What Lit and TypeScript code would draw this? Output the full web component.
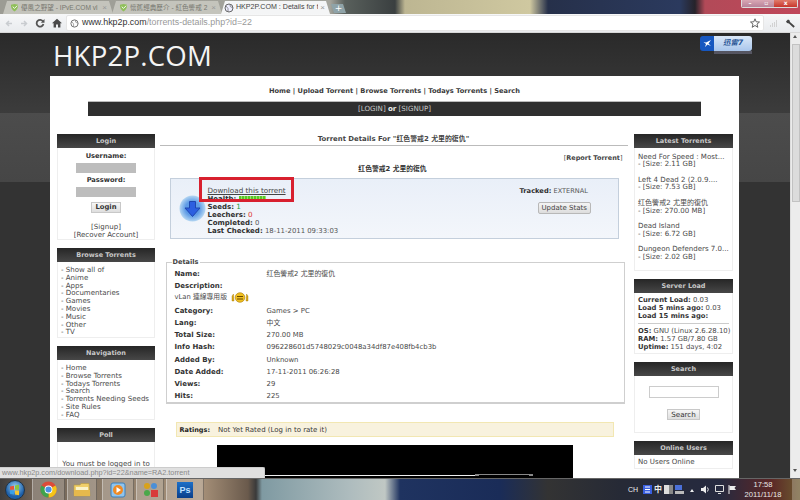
import { LitElement, html, css, svg } from "lit";
import { customElement } from "lit/decorators.js";

const shield = svg`<svg width="9" height="9" viewBox="0 0 10 10"><path d="M1 2 L5 1 L9 2 Q9 7 5 9.5 Q1 7 1 2Z" fill="#8fbf5a"/><path d="M3 4 L5 6 L8 3" stroke="#fff" fill="none"/></svg>`;
const globe = svg`<svg width="10" height="10" viewBox="0 0 10 10"><circle cx="5" cy="5" r="4" fill="#eef" stroke="#666"/><path d="M2 3 Q5 5 4 9 M6 1 Q5 4 9 5" stroke="#777" fill="none" stroke-width=".8"/></svg>`;

@customElement("app-root")
export class AppRoot extends LitElement {
  static styles = css`
    :host { display: block; width: 800px; height: 500px; overflow: hidden; position: relative; font-family: "DejaVu Sans", Verdana, "Noto Sans CJK TC", sans-serif; font-size: 7.05px; line-height: 7.8px; color: #4a4a4a; background: #333; }
    * { box-sizing: border-box; }
    .win { width: 800px; height: 500px; display: flex; flex-direction: column; }
    .tabbar { height: 14px; flex: none; position: relative; display: flex; align-items: flex-end; padding-left: 3px; background: linear-gradient(90deg, #9c9c94 0, #a5a59d 330px, #59605c 345px, #3a3f40 395px, #bdb692 405px, #cfc8a0 530px, #26304a 548px, #2b3a5e 680px, #26232a 695px, #b24a58 705px, #c0475a 800px); }
    .tab { height: 13px; width: 110px; margin-right: -1px; padding: 0 6px 0 7px; display: flex; align-items: center; gap: 2px; font-family: "Liberation Sans", "Noto Sans CJK TC", sans-serif; font-size: 6.6px; color: #77776f; white-space: nowrap; overflow: hidden; background: #c4c4bc; clip-path: polygon(0 100%, 4px 0, calc(100% - 4px) 0, 100% 100%); }
    .tab span.t { flex: 1; overflow: hidden; }
    .tab i { font-style: normal; color: #999; font-size: 8px; }
    .tab.sel { width: 109px; padding: 0 5px 0 3px; background: #f4f5f6; color: #444; font-size: 7.1px; }
    .newtab { width: 15px; height: 9px; margin-left: 2px; margin-bottom: 1px; background: #8fa3a8; color: #fff; font-size: 9px; line-height: 9px; text-align: center; clip-path: polygon(0 0, 80% 0, 100% 100%, 20% 100%); }
    .winbtns { position: absolute; right: 2px; top: 0; width: 57px; height: 8px; display: flex; border-radius: 0 0 2px 2px; overflow: hidden; border: 1px solid #ddd; border-top: 0; }
    .winbtns b { flex: 1; background: linear-gradient(#d9a7b4, #b8849a); color: #fff; font-size: 6px; line-height: 6px; text-align: center; }
    .winbtns b.x { flex: 1.4; background: linear-gradient(#e07a6a, #c8362c); }
    .toolbar { height: 19px; flex: none; display: flex; align-items: center; background: linear-gradient(#f6f7f8, #e9ebee); border-bottom: 1px solid #d8d8d8; padding: 0 2px 0 5px; }
    .navic { display: flex; gap: 7px; align-items: center; width: 61px; flex: none; }
    .omni { flex: 1; height: 16px; background: #fff; border: 1px solid #e6e6e6; border-radius: 2px; display: flex; align-items: center; gap: 3px; padding: 0 3px 0 3px; font-family: "Liberation Sans", sans-serif; font-size: 8.9px; color: #999; margin-right: 5px; }
    .omni span { flex: 1; }
    .omni b { font-weight: 400; color: #333; }
    .tools { display: flex; gap: 7px; align-items: center; width: 29px; flex: none; }
    .view { flex: 1; min-height: 0; display: flex; position: relative; }
    .page { flex: 1; min-width: 0; overflow: hidden; background: linear-gradient(#2a2a2a 0, #3c3c3c 80px, #4c4c4c 80px, #464646 149px, #333 149px); }
    .sb { width: 10px; flex: none; background: #ececec; display: flex; flex-direction: column; align-items: center; border-left: 1px solid #ddd; padding-top: 11px; }
    .thumb { width: 8px; height: 158px; background: #dcdcdc; border: 1px solid #c2c2c2; }
    .sbup { position: absolute; right: 3px; top: 0; border: 2.5px solid transparent; border-bottom: 3px solid #555; }
    .sbdn { position: absolute; right: 3px; bottom: 4px; border: 2.5px solid transparent; border-top: 3px solid #555; }
    .head { height: 43px; padding-left: 53px; position: relative; }
    .logo { font-family: "Open Sans", sans-serif; font-size: 27.6px; line-height: 36px; padding-top: 4px; color: #f4f4f4; letter-spacing: .2px; }
    .xl { position: absolute; left: 700px; top: 3px; width: 52px; height: 15px; display: flex; border-radius: 3px; overflow: hidden; }
    .xl .a { width: 14px; background: #1657c0; display: flex; align-items: center; justify-content: center; }
    .xl .b { flex: 1; background: linear-gradient(#dbe8f8, #a9c6ec); color: #2a5596; font-size: 7.5px; line-height: 14px; font-weight: 700; font-style: italic; text-align: center; }
    .xlsh { position: absolute; left: 714px; top: 18px; width: 38px; height: 3px; background: #667; opacity: .7; }
    .panel { margin-left: 50px; width: 689px; height: 420px; background: #fff; }
    .menu { padding-top: 12px; height: 25px; text-align: center; font-weight: 700; color: #3a3a3a; font-size: 6.65px; }
    .bar { margin: 0 38px; height: 15px; background: #2f2f2f; border-top: 1px solid #bbb; color: #c8c8c8; text-align: center; font-size: 7.1px; line-height: 14px; }
    .bar b { color: #eee; }
    .cols { display: grid; grid-template-columns: 98px 466px 99px; column-gap: 6.5px; padding: 18px 0 0 7px; }
    .side { display: flex; flex-direction: column; gap: 8px; }
    .box { border: 1px solid #eee; border-top: 0; }
    .bh { height: 14px; margin: 0 -1px; background: linear-gradient(#262626, #474747); color: #c9c9c9; font-weight: 700; font-size: 6.5px; line-height: 14px; text-align: center; }
    .login { height: 91px; text-align: center; padding-top: 4px; }
    .login b { display: block; color: #333; font-size: 6.7px; line-height: 8px; }
    .fld { display: block; width: 60px; height: 10px; margin: 3px auto 3px; background: #bdbdbd; }
    .btn { display: inline-block; background: linear-gradient(#f6f6f6, #dedede); border: 1px solid #c8c8c8; color: #333; font-size: 7.2px; line-height: 9px; padding: 0 3px; }
    .btn.bold { font-weight: 700; margin-top: 2px; font-size: 6.8px; }
    .mt { margin-top: 10px; }
    .list { padding: 4px 3px 0; height: 75px; }
    .nav { padding: 4px 3px 0; height: 59px; }
    .poll { height: 60px; padding: 18px 4px 0; text-align: center; }
    .lat { height: 122px; padding: 4.5px 3px 0; overflow: hidden; }
    .lat p { margin: 0 0 7.6px; }
    .load { height: 60px; padding: 4px 0 0 3px; white-space: nowrap; font-size: 6.9px; }
    .load b { color: #333; font-size: 6.8px; }
    .load hr { border: 0; border-top: 1px solid #ccc; margin: 3px 3px 4px 0; }
    .srch { height: 56px; text-align: center; padding-top: 10px; }
    .srch .in { display: block; width: 70px; height: 12px; margin: 0 auto 11px; border: 1px solid #ccc; }
    .online { height: 13px; padding: 3px; }
    .tt { height: 12px; margin-left: -2px; border-bottom: 1px solid #bbb; text-align: center; font-weight: 700; color: #444; font-size: 6.9px; line-height: 10px; }
    .rep { text-align: right; padding: 8px 5px 0 0; font-size: 6.5px; line-height: 8px; }
    .rep b { color: #444; }
    .t2 { text-align: center; color: #333; font-weight: 700; font-size: 6.8px; line-height: 10px; padding-top: 2px; height: 16px; margin-left: -4px; }
    .info { margin-left: 8px; width: 449px; height: 61px; background: linear-gradient(#e9eff8, #f3f6fb); border: 1px solid #c4cfdc; position: relative; display: flex; padding: 8px 0 0 37px; color: #333; font-size: 7.2px; line-height: 8px; }
    .info .arrow { position: absolute; left: 8px; top: 16px; }
    .info .l { flex: 1; }
    .info b { color: #2f2f2f; font-size: 7px; }
    .dl { color: #444; text-decoration: underline; }
    .info .r { width: 98px; font-size: 6.7px; }
    .info .r b { font-size: 6.7px; }
    .ok { color: #1a9a3a; } .bad { color: #d33; } .g { color: #555; font-weight: 400; font-size: 6.9px; }
    .info .r .g { font-size: 6.6px; }
    .hl { display: inline-block; width: 27px; height: 5px; background: repeating-linear-gradient(90deg, #58c828 0 2px, #9be06a 2px 3px); vertical-align: 0; }
    .red { position: absolute; left: 28px; top: -2px; width: 95px; height: 25px; border: 3px solid #d8202f; }
    .upd { position: absolute; left: 367px; top: 23px; font-size: 7px; padding: 1px 3px; background: linear-gradient(#f4f4f4, #ddd); border: 1px solid #b8b8b8; border-radius: 2px; color: #444; }
    fieldset { margin: 19px 0 0 4px; width: 459px; height: 146px; border: 1px solid #cfcfcf; border-bottom-width: 2px; padding: 0 0 0 8px; min-width: 0; }
    legend { margin-left: -3px; padding: 0 1px; font-weight: 700; color: #444; font-size: 6.6px; line-height: 8px; }
    .rows { display: grid; grid-template-columns: 92px 1fr; grid-auto-rows: 12.2px; align-items: center; font-size: 6.9px; padding-top: 3px; }
    .rows b { color: #333; font-size: 7px; }
    .desc { grid-column: 1 / 3; display: flex; align-items: center; gap: 4px; font-size: 6.8px; }
    .up { margin-bottom: 3px; }
    .rate { margin: 18px 0 0 14px; width: 438px; height: 15px; background: #f8f2de; border: 1px solid #f2e7b2; padding: 1px 0 0 3px; font-size: 7px; line-height: 13px; display: flex; gap: 8px; color: #3a3a3a; }
    .rate b { color: #222; font-size: 6.5px; }
    .video { margin: 8px 0 0 55px; width: 356px; height: 60px; background: #000; position: relative; }
    .vbar { position: absolute; left: 48px; top: 30px; width: 210px; height: 1px; background: #eee; }
    .vbar2 { position: absolute; left: 258px; top: 29px; width: 58px; height: 2px; border: 1px solid #888; border-width: 1px 4px 0; }
    .status { position: absolute; left: 0; bottom: 0; width: 265px; height: 11px; background: #e0e0e0; border-top: 1px solid #ccc; border-right: 1px solid #ccc; border-radius: 0 2px 0 0; color: #888; font-family: "Liberation Sans", sans-serif; font-size: 7.3px; line-height: 10px; padding-left: 2px; white-space: nowrap; }
    .task { height: 22px; flex: none; display: flex; align-items: center; position: relative; background: linear-gradient(90deg, #3f3d3c 0, #6a5d50 30px, #8a7a68 100px, #a8927a 200px, #6a5a4c 248px, #3a3a3a 256px, #7f9aa2 262px, #aebcbe 350px, #c0c8c4 385px, #1f3360 400px, #1a2c58 500px, #333 548px, #262a36 620px, #262a40 720px, #5a2626 770px, #6d5a30 800px); border-top: 1px solid #666; }
    .orb { width: 32px; display: flex; justify-content: flex-start; padding-left: 5px; flex: none; }
    .tb { width: 33px; height: 21px; display: flex; align-items: center; justify-content: center; flex: none; background: rgba(255,255,255,.22); border-left: 1px solid rgba(255,255,255,.35); border-right: 1px solid rgba(0,0,0,.3); margin-right: 2px; }
    .w30 { width: 30px; margin-right: 5px; }
    .w32 { width: 32px; }
    .w28 { width: 28px; }
    .w38 { width: 38px; }
    .ps { width: 16px; height: 16px; background: linear-gradient(#1c6fc8, #0a3f8a); color: #bfe0ff; font-family: "Liberation Sans", sans-serif; font-size: 9px; font-weight: 700; line-height: 16px; text-align: center; }
    .sp { flex: 1; }
    .tray { display: flex; align-items: center; gap: 2px; color: #eee; font-size: 7px; padding-right: 7px; font-family: "Liberation Sans", "Noto Sans CJK TC", sans-serif; }
    .zh { font-size: 8px; font-weight: 700; }
    .tup { display: inline-block; border: 2.5px solid transparent; border-bottom: 3px solid #eee; }
    .s0 { width: 0; } .s1 { width: 1px; } .s2 { width: 2px; } .s3 { width: 3px; }
    .clock { width: 44px; text-align: center; color: #e8e8e8; font-family: "Liberation Sans", sans-serif; font-size: 7.6px; line-height: 10px; margin-left: 2px; }
    .show { width: 8px; height: 21px; background: rgba(255,255,255,.25); flex: none; }
  `;

  private box(title: string, cls: string, body: unknown) {
    return html`<section class="box"><div class="bh">${title}</div><div class="${cls}">${body}</div></section>`;
  }

  render() {
    const rows: [string, string][] = [
      ["Category:", "Games > PC"], ["Lang:", "中文"], ["Total Size:", "270.00 MB"],
      ["Info Hash:", "096228601d5748029c0048a34df87e408fb4cb3b"], ["Added By:", "Unknown"],
      ["Date Added:", "17-11-2011 06:26:28"], ["Views:", "29"], ["Hits:", "225"],
    ];
    const latest: [string, string][] = [
      ["Need For Speed : Most...", "2.11 GB"], ["Left 4 Dead 2 (2.0.9....", "7.53 GB"],
      ["红色警戒2 尤里的復仇", "270.00 MB"], ["Dead Island", "6.72 GB"], ["Dungeon Defenders 7.0...", "2.02 GB"],
    ];
    return html`<div class="win">
      <div class="tabbar">
        <div class="tab">${shield}<span class="t">優風之野望 - IPvE.COM vl</span><i>×</i></div>
        <div class="tab">${shield}<span class="t">懷舊經典歷介 - 紅色警戒 2</span><i>×</i></div>
        <div class="tab sel">${globe}<span class="t">HKP2P.COM : Details for t</span><i>×</i></div>
        <div class="newtab">+</div>
        <div class="winbtns"><b>–</b><b>▫</b><b class="x">x</b></div>
      </div>
      <div class="toolbar">
        <div class="navic">
          <svg width="8" height="9" viewBox="0 0 8 9"><path d="M7 4.5H2M4 2L1.5 4.5L4 7" stroke="#c9ccd0" stroke-width="1.5" fill="none"/></svg>
          <svg width="8" height="9" viewBox="0 0 8 9"><path d="M1 4.5H6M4 2L6.5 4.5L4 7" stroke="#c9ccd0" stroke-width="1.5" fill="none"/></svg>
          <svg width="10" height="10" viewBox="0 0 10 10"><path d="M8 3.5A3.4 3.4 0 1 0 8.4 6" stroke="#555" stroke-width="1.8" fill="none"/><path d="M9.5 1V4.8H5.8Z" fill="#555"/></svg>
          <svg width="10" height="10" viewBox="0 0 10 10"><path d="M5 .8L10 5.2H8.4V9.5H6V6.5H4V9.5H1.6V5.2H0Z" fill="#4a4a4a"/></svg>
        </div>
        <div class="omni">
          <svg width="9" height="9" viewBox="0 0 10 10"><circle cx="5" cy="5" r="4" fill="none" stroke="#666"/><path d="M2 3Q5 5 4 9M6 1Q5 4 9 5" stroke="#888" fill="none" stroke-width=".8"/></svg>
          <span><b>www.hkp2p.com</b>/torrents-details.php?id=22</span>
          <svg width="10" height="10" viewBox="0 0 10 10"><path d="M5 .8L6.2 3.8L9.5 4L7 6.1L7.8 9.3L5 7.5L2.2 9.3L3 6.1L.5 4L3.8 3.8Z" fill="#fff" stroke="#555" stroke-width=".9"/></svg>
        </div>
        <div class="tools">
          <svg width="9" height="8" viewBox="0 0 9 8"><path d="M1 8V6h1v2zM3 8V4h1v4zM5 8V3h1v5zM7 8V1h1v7z" fill="#d2d2d2"/></svg>
          <svg width="11" height="11" viewBox="0 0 11 11"><path d="M1 3.5L3 1.5L4.5 2.2L5 4L9.8 8.2L8.5 9.8L4 5.4L2 5Z" fill="#444"/></svg>
        </div>
      </div>
      <div class="view">
        <div class="page">
          <div class="head">
            <div class="logo">HKP2P.COM</div>
            <div class="xl"><div class="a"><svg width="9" height="9" viewBox="0 0 9 9"><path d="M8 1L3 3.5L0.5 3L3 5L2 8L4.5 5.5L8 7L5.5 4.5Z" fill="#fff"/></svg></div><div class="b">迅雷7</div></div>
            <div class="xlsh"></div>
          </div>
          <div class="panel">
            <div class="menu">Home | Upload Torrent | Browse Torrents | Todays Torrents | Search</div>
            <div class="bar">[LOGIN] <b>or</b> [SIGNUP]</div>
            <div class="cols">
              <div class="side">
                ${this.box("Login", "login", html`
                  <b>Username:</b><span class="fld"></span>
                  <b>Password:</b><span class="fld"></span>
                  <span class="btn bold">Login</span>
                  <div class="mt">[Signup]<br>[Recover Account]</div>`)}
                ${this.box("Browse Torrents", "list", html`- Show all of<br>- Anime<br>- Apps<br>- Documentaries<br>- Games<br>- Movies<br>- Music<br>- Other<br>- TV`)}
                ${this.box("Navigation", "nav", html`- Home<br>- Browse Torrents<br>- Todays Torrents<br>- Search<br>- Torrents Needing Seeds<br>- Site Rules<br>- FAQ`)}
                ${this.box("Poll", "poll", html`You must be logged in to`)}
              </div>
              <div>
                <div class="tt">Torrent Details For "红色警戒2 尤里的復仇"</div>
                <div class="rep">[<b>Report Torrent</b>]</div>
                <div class="t2">红色警戒2 尤里的復仇</div>
                <div class="info">
                  <svg class="arrow" width="27" height="27" viewBox="0 0 27 27"><defs><radialGradient id="ag"><stop offset=".55" stop-color="#5f9ce6"/><stop offset="1" stop-color="#b4d6f2"/></radialGradient></defs><circle cx="13.5" cy="13.5" r="13" fill="url(#ag)"/><path d="M10.5 6.5H16.5V13H21L13.5 21.5L6 13H10.5Z" fill="#2c5fe0" stroke="#1e47b0" stroke-linejoin="round"/></svg>
                  <div class="l">
                    <a class="dl">Download this torrent</a><br>
                    <b>Health:</b> <span class="hl"></span><br>
                    <b>Seeds:</b> <span class="ok">1</span><br>
                    <b>Leechers:</b> <span class="bad">0</span><br>
                    <b>Completed:</b> <span class="g">0</span><br>
                    <b>Last Checked:</b> <span class="g">18-11-2011 09:33:03</span>
                  </div>
                  <div class="r"><b>Tracked:</b> <span class="g">EXTERNAL</span></div>
                  <div class="red"></div>
                  <div class="upd">Update Stats</div>
                </div>
                <fieldset>
                  <legend>Details</legend>
                  <div class="rows">
                    <b>Name:</b><span>红色警戒2 尤里的復仇</span>
                    <b class="desc">Description:</b>
                    <span class="desc up">vLan 連線專用版
                      <svg width="18" height="11" viewBox="0 0 18 11"><circle cx="9" cy="5.5" r="4.8" fill="#f0c020" stroke="#a87808" stroke-width=".6"/><path d="M6 4.5h6M6 7h6" stroke="#6a4a00" stroke-width="1.2"/><path d="M1 9V4l1.5-2L3 9ZM17 9V4l-1.5-2L15 9Z" fill="#d8a818" stroke="#a87808" stroke-width=".4"/></svg>
                    </span>
                    ${rows.map(([k, v]) => html`<b>${k}</b><span>${v}</span>`)}
                  </div>
                </fieldset>
                <div class="rate"><b>Ratings:</b><span>Not Yet Rated (Log in to rate it)</span></div>
                <div class="video"><div class="vbar"></div><div class="vbar2"></div></div>
              </div>
              <div class="side">
                ${this.box("Latest Torrents", "lat", latest.map(([n, s]) => html`<p>${n}<br>- [Size: ${s}]</p>`))}
                ${this.box("Server Load", "load", html`
                  <b>Current Load:</b> 0.03<br><b>Load 5 mins ago:</b> 0.03<br><b>Load 15 mins ago:</b>
                  <hr><b>OS:</b> GNU (Linux 2.6.28.10)<br><b>RAM:</b> 1.57 GB/7.80 GB<br><b>Uptime:</b> 151 days, 4:02`)}
                ${this.box("Search", "srch", html`<span class="in"></span><span class="btn">Search</span>`)}
                ${this.box("Online Users", "online", html`No Users Online`)}
              </div>
            </div>
          </div>
        </div>
        <div class="sb"><div class="thumb"></div></div>
        <div class="sbup"></div><div class="sbdn"></div>
        <div class="status">www.hkp2p.com/download.php?id=22&amp;name=RA2.torrent</div>
      </div>
      <div class="task">
        <div class="orb"><svg width="20" height="20" viewBox="0 0 20 20"><defs><radialGradient id="og" cy=".35"><stop offset="0" stop-color="#9fd4f4"/><stop offset="1" stop-color="#1d5fa8"/></radialGradient></defs><circle cx="10" cy="10" r="9.5" fill="url(#og)" stroke="#234"/><path d="M5 6.5l4-.8v4H5z" fill="#e8553a"/><path d="M10 5.6l4-.8v4.9h-4z" fill="#8cc63f"/><path d="M5 10.5h4v4l-4-.7z" fill="#38a0e8"/><path d="M10 10.5h4v4.7l-4-.8z" fill="#f6c632"/></svg></div>
        <div class="tb"><svg width="17" height="17" viewBox="0 0 20 20"><circle cx="10" cy="10" r="9.5" fill="#dd4b39"/><path d="M10 10L18.2 5.2A9.5 9.5 0 0 1 10 19.5Z" fill="#f5c518"/><path d="M10 10L10 19.5A9.5 9.5 0 0 1 1.8 5.2Z" fill="#3fa34d"/><circle cx="10" cy="10" r="4.6" fill="#fff"/><circle cx="10" cy="10" r="3.6" fill="#4a90e2"/></svg></div>
        <div class="tb w30"><svg width="18" height="15" viewBox="0 0 18 15"><path d="M1 3H7L8 1.5H16L17 14H1Z" fill="#f0cf6a" stroke="#b89a40" stroke-width=".6"/><path d="M3 5H15V10H3Z" fill="#fbf3c8"/><path d="M1 8H17L17 14H1Z" fill="#e6b94c"/></svg></div>
        <div class="tb w32"><svg width="16" height="16" viewBox="0 0 16 16"><rect x="1" y="1" width="14" height="14" rx="2" fill="#8fc4ee" stroke="#3f7fb8"/><circle cx="8" cy="8" r="5" fill="#f08a24"/><path d="M6.5 5L11 8L6.5 11Z" fill="#fff"/></svg></div>
        <div class="tb w28"><svg width="17" height="17" viewBox="0 0 17 17"><circle cx="5" cy="5" r="3" fill="#d9a21b"/><circle cx="12" cy="5" r="3" fill="#4a8fd8"/><circle cx="5" cy="12" r="3" fill="#4aa84a"/><rect x="9" y="9" width="7" height="7" fill="#d83a3a"/></svg></div>
        <div class="tb w38"><div class="ps">Ps</div></div>
        <div class="sp"></div>
        <div class="tray">
          <span>CH</span>
          <span class="s1"></span>
          <svg width="9" height="9" viewBox="0 0 9 9"><rect width="9" height="9" fill="#3a5fe0"/><path d="M2 2h5M2 4.5h5M2 7h5" stroke="#fff"/></svg>
          <b class="zh">中</b>
          <svg width="9" height="9" viewBox="0 0 9 9"><rect width="9" height="9" fill="#ddd"/><rect x="5" width="4" height="9" fill="#888"/></svg>
          <svg width="9" height="9" viewBox="0 0 9 9"><rect width="7" height="5" fill="#4a6fd8"/><rect y="6" width="9" height="3" fill="#bbb"/></svg>
          <span class="s2"></span><span class="tup"></span><span class="s3"></span>
          <svg width="9" height="9" viewBox="0 0 9 9"><path d="M0 3H2L5 .5V8.5L2 6H0Z" fill="#eee"/><path d="M6.5 2.5Q8 4.5 6.5 6.5" stroke="#eee" fill="none"/></svg>
          <span class="s1"></span>
          <svg width="9" height="9" viewBox="0 0 9 9"><path d="M.5.5H8.5V6.5H.5Z" fill="none" stroke="#ddd"/><path d="M3 8.5H6" stroke="#ddd"/></svg>
          <span class="s0"></span>
          <svg width="9" height="9" viewBox="0 0 9 9"><path d="M1 0V9" stroke="#eee"/><path d="M1.5 1H8L6.5 3L8 5H1.5Z" fill="#eee"/></svg>
          <div class="clock">17:58<br>2011/11/18</div>
        </div>
        <div class="show"></div>
      </div>
    </div>`;
  }
}
